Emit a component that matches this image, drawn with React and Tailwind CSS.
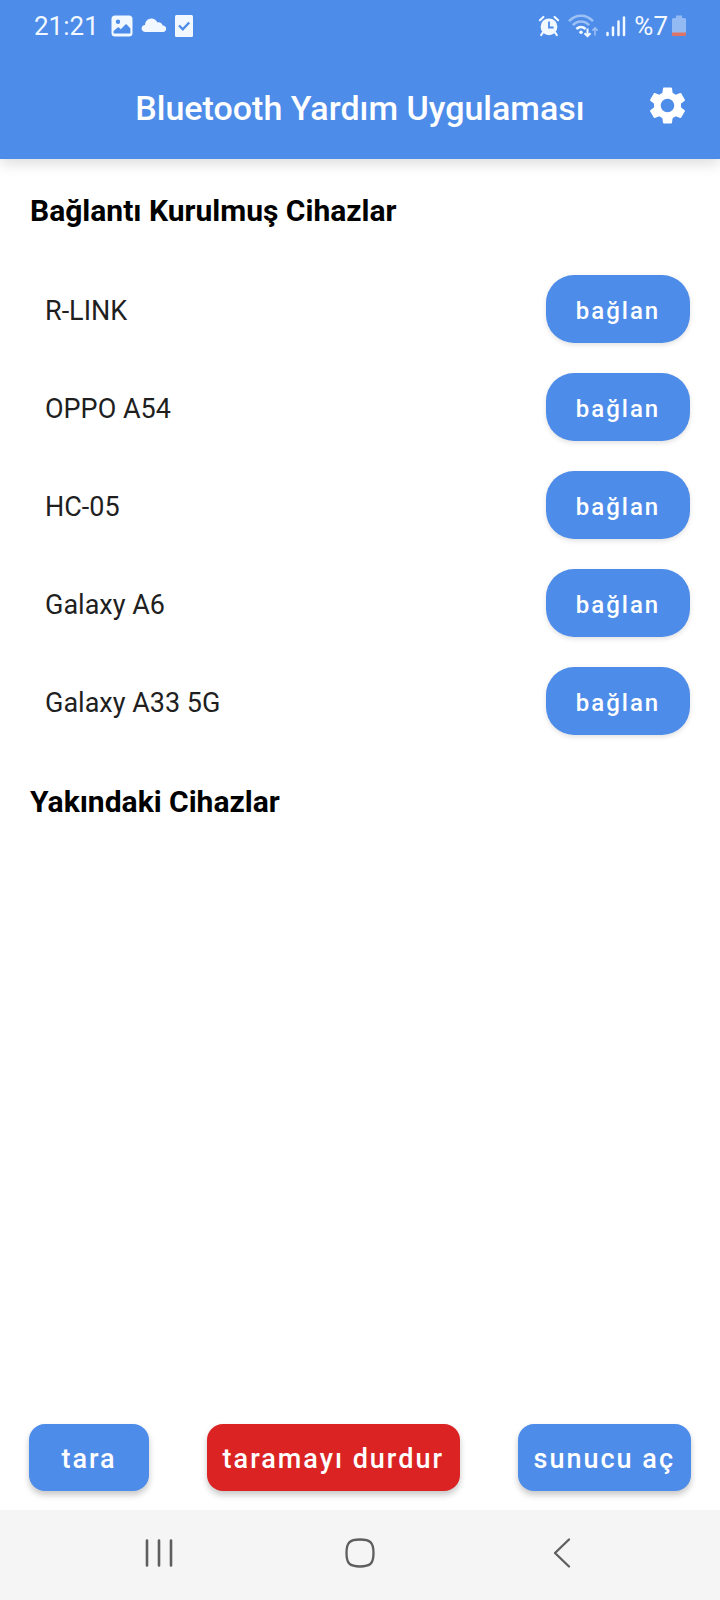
import React from "react";

const pairedDevices = ["R-LINK", "OPPO A54", "HC-05", "Galaxy A6", "Galaxy A33 5G"];

function ImageIcon() {
  return (
    <svg width="22" height="22" viewBox="0 0 22 22" aria-hidden="true">
      <path
        fillRule="evenodd"
        fill="#f2f8ff"
        d="M4 0.5h14a3.5 3.5 0 0 1 3.5 3.5v14a3.5 3.5 0 0 1-3.5 3.5H4a3.5 3.5 0 0 1-3.5-3.5V4A3.5 3.5 0 0 1 4 .5zM7 4.6a2.2 2.2 0 1 0 0 4.4 2.2 2.2 0 0 0 0-4.4zM2.6 18.6h16.8v-5.2l-3.6-3.8a1 1 0 0 0-1.4 0l-4.6 4.6-1.8-1.6a1 1 0 0 0-1.4 0l-4 3.4z"
      />
    </svg>
  );
}

function CloudIcon() {
  return (
    <svg width="26" height="22" viewBox="0 0 26 22" aria-hidden="true">
      <path
        fill="#f2f8ff"
        d="M4.600 17C2.300 17 .6 15.700 .6 13.600c0-2 1.400-3.400 3.400-3.600C4.200 6.200 6.800 3.400 10.300 3.400c2.700 0 4.900 1.500 6 4 2.700-.6 4.900.9 5.400 3.200 2.200.1 3.500 1.400 3.500 3.200 0 1.900-1.300 3.200-3.200 3.200z"
      />
    </svg>
  );
}

function CheckNoteIcon() {
  return (
    <svg width="18" height="22" viewBox="0 0 18 22" aria-hidden="true">
      <rect x="0" y="0" width="18" height="22" rx="1.500" fill="#f2f8ff" />
      <path d="M4 10.500l3.800 3.800 6.400-6.800" fill="none" stroke="#4d8ce9" strokeWidth="2.300" />
    </svg>
  );
}

function AlarmIcon() {
  return (
    <svg width="22" height="22" viewBox="0 0 22 22" aria-hidden="true">
      <circle cx="11" cy="11.800" r="8.400" fill="#f2f8ff" />
      <path
        d="M1.900 5.200L5.400 2M20.100 5.200L16.600 2M4.800 17.600L3.200 20M17.200 17.600l1.600 2.400"
        stroke="#f2f8ff"
        strokeWidth="2.200"
        strokeLinecap="round"
      />
      <path d="M11 6.500v6h4.600" fill="none" stroke="#4d8ce9" strokeWidth="1.800" />
    </svg>
  );
}

function WifiIcon() {
  return (
    <svg width="30" height="24" viewBox="0 0 30 24" fill="none" aria-hidden="true">
      <path d="M1 7.200C7.800-.2 18.200-.2 25 7.200" stroke="#9cc0f4" strokeWidth="2.500" />
      <path d="M4.800 11.200c4.800-5 11.600-5 16.400 0" stroke="#9cc0f4" strokeWidth="2.500" />
      <path d="M8.400 15c2.800-2.800 6.400-2.800 9.200 0" stroke="#f2f8ff" strokeWidth="2.500" />
      <circle cx="13" cy="18.200" r="1.800" fill="#f2f8ff" />
      <path d="M19.500 14.500v7.500M16.500 19.200l3 3 3-3" stroke="#f2f8ff" strokeWidth="2" />
      <path d="M27 21.500v-7.500M24.400 16.600l2.600-2.600 2.600 2.600" stroke="#9cc0f4" strokeWidth="1.600" />
    </svg>
  );
}

function SignalIcon() {
  return (
    <svg width="20" height="22" viewBox="0 0 20 22" aria-hidden="true">
      <path
        d="M1.500 20v-2M7 20v-7.500M12.500 20V6.500M18 20V2.500"
        stroke="#f2f8ff"
        strokeWidth="2.500"
        strokeLinecap="round"
      />
    </svg>
  );
}

function BatteryIcon() {
  return (
    <svg width="14" height="22" viewBox="0 0 14 22" aria-hidden="true">
      <path d="M4 0.500h6V3h2.500A1.500 1.500 0 0 1 14 4.500V18H0V4.500A1.500 1.500 0 0 1 1.500 3H4z" fill="#94baf3" />
      <path d="M0 17.500h14v2.300a1.300 1.300 0 0 1-1.300 1.300H1.300A1.300 1.300 0 0 1 0 19.800z" fill="#de7468" />
    </svg>
  );
}

function GearIcon() {
  return (
    <svg width="45" height="45" viewBox="0 0 24 24" fill="#fff" aria-hidden="true">
      <path d="M19.140 12.940c.04-.3.060-.61.060-.94 0-.32-.02-.64-.07-.94l2.030-1.580c.18-.14.23-.41.120-.61l-1.920-3.320c-.12-.22-.37-.29-.59-.22l-2.390.96c-.5-.38-1.030-.7-1.620-.94l-.36-2.540c-.04-.24-.24-.41-.48-.41h-3.840c-.24 0-.43.17-.47.41l-.36 2.540c-.59.24-1.130.57-1.620.94l-2.390-.96c-.22-.08-.47 0-.59.22L2.740 8.870c-.12.21-.08.47.12.610l2.030 1.580c-.05.3-.09.63-.09.94s.02.64.07.94l-2.030 1.580c-.18.14-.23.41-.12.610l1.920 3.320c.12.22.37.29.59.22l2.390-.96c.5.38 1.030.7 1.620.94l.36 2.540c.05.24.24.41.48.41h3.840c.24 0 .44-.17.47-.41l.36-2.540c.59-.24 1.130-.56 1.620-.94l2.390.96c.22.08.47 0 .59-.22l1.920-3.320c.12-.22.07-.47-.12-.61l-2.010-1.580zM12 15.600c-1.980 0-3.600-1.620-3.600-3.600s1.620-3.600 3.600-3.600 3.600 1.620 3.600 3.600-1.620 3.600-3.600 3.600z" />
    </svg>
  );
}

function StatusBar() {
  return (
    <div className="flex h-[52px] items-center justify-between px-[34px] text-[26px] leading-8 text-[#f2f8ff]">
      <div className="flex items-center gap-2">
        <span className="mr-1">21:21</span>
        <ImageIcon />
        <CloudIcon />
        <CheckNoteIcon />
      </div>
      <div className="flex items-center gap-2">
        <div className="flex items-center gap-2">
          <AlarmIcon />
          <WifiIcon />
        </div>
        <SignalIcon />
        <div className="flex items-center gap-1">
          <span>%7</span>
          <BatteryIcon />
        </div>
      </div>
    </div>
  );
}

function SectionTitle({ children }) {
  return (
    <h2 className="px-[30px] pt-[33px] pb-[30px] text-[30px] leading-[38px] font-bold text-black">{children}</h2>
  );
}

function ActionButton({ className, children }) {
  return (
    <button
      type="button"
      className={`h-[67px] rounded-2xl px-4 pt-1 text-[27px] font-medium tracking-[2px] whitespace-nowrap text-white shadow-[0_4px_6px_rgba(0,0,0,0.22)] ${className}`}
    >
      {children}
    </button>
  );
}

export default function App() {
  return (
    <div className="flex min-h-screen flex-col bg-white font-[Roboto,sans-serif]">
      <header className="bg-[#4d8ce9] shadow-[0_4px_14px_rgba(0,0,0,0.15)]">
        <StatusBar />
        <div className="flex h-[107px] items-center justify-between px-[30px]">
          <span className="w-[45px]" />
          <h1 className="pt-1 text-[34px] leading-10 font-medium text-white">Bluetooth Yardım Uygulaması</h1>
          <button type="button" aria-label="Ayarlar">
            <GearIcon />
          </button>
        </div>
      </header>

      <main className="flex flex-1 flex-col">
        <SectionTitle>Bağlantı Kurulmuş Cihazlar</SectionTitle>
        <ul>
          {pairedDevices.map((name) => (
            <li key={name} className="flex h-[98px] items-center justify-between pr-[30px] pl-[45px]">
              <span className="pt-1 text-[27px] leading-8 text-[#1f1f1f]">{name}</span>
              <button
                type="button"
                className="h-[68px] w-36 rounded-[28px] bg-[#4d8ce9] pt-1 text-2xl font-medium tracking-[2px] text-white shadow-[0_2px_5px_rgba(0,0,0,0.12)]"
              >
                bağlan
              </button>
            </li>
          ))}
        </ul>
        <SectionTitle>Yakındaki Cihazlar</SectionTitle>

        <div className="mt-auto flex justify-between px-[29px] pb-[19px]">
          <ActionButton className="min-w-[120px] bg-[#4d8ce9]">tara</ActionButton>
          <ActionButton className="bg-[#db2323]">taramayı durdur</ActionButton>
          <ActionButton className="bg-[#4d8ce9]">sunucu aç</ActionButton>
        </div>
      </main>

      <nav className="flex h-[90px] items-center justify-center gap-[172px] bg-[#f5f5f5] pb-1">
        <button type="button" aria-label="Son uygulamalar">
          <svg width="30" height="30" viewBox="0 0 30 30" fill="none" stroke="#5e5e5e" strokeWidth="2.600" strokeLinecap="round">
            <path d="M4 2.500v25M16 2.500v25M28 2.500v25" />
          </svg>
        </button>
        <button type="button" aria-label="Ana ekran">
          <svg width="30" height="30" viewBox="0 0 30 30" fill="none" stroke="#5e5e5e" strokeWidth="2.300">
            <path d="M15 1.500C25.500 1.500 28.500 4.500 28.500 15S25.500 28.500 15 28.500 1.500 25.500 1.500 15 4.500 1.500 15 1.500z" />
          </svg>
        </button>
        <button type="button" aria-label="Geri">
          <svg width="30" height="30" viewBox="0 0 30 30" fill="none" stroke="#5e5e5e" strokeWidth="2.300" strokeLinecap="round" strokeLinejoin="round">
            <path d="M22 1.500L8 15 22 28.500" />
          </svg>
        </button>
      </nav>
    </div>
  );
}
